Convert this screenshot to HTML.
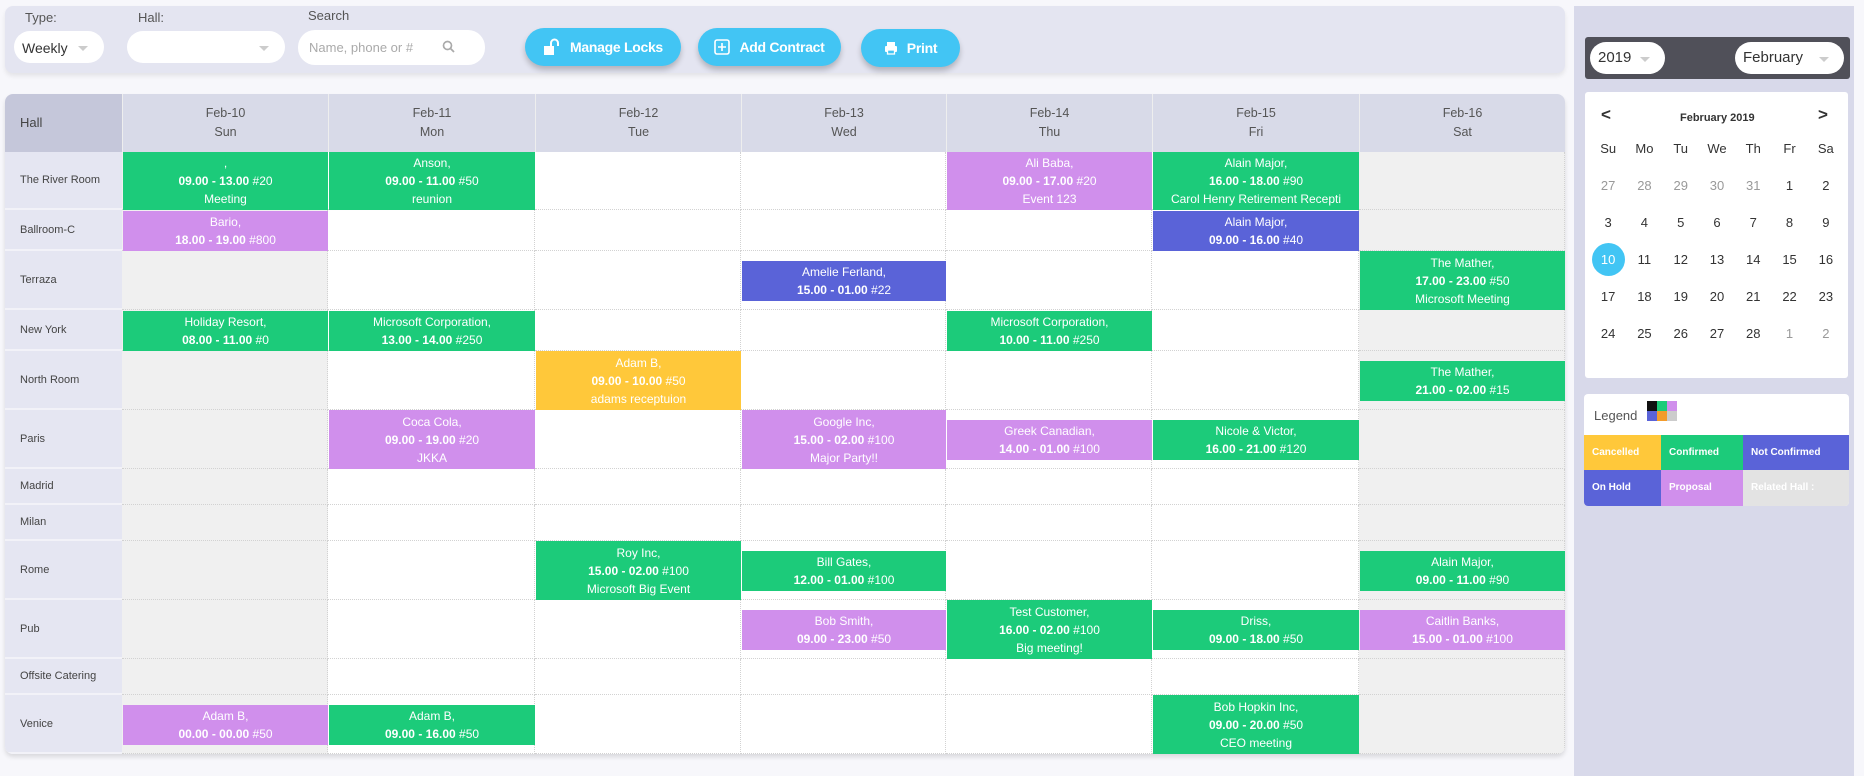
<!DOCTYPE html>
<html><head><meta charset="utf-8"><style>
*{box-sizing:border-box;margin:0;padding:0}
body{width:1864px;height:776px;background:#f7f7fb;font-family:"Liberation Sans",sans-serif;position:relative;overflow:hidden;color:#444}
.abs{position:absolute}
.bar{left:5px;top:6px;width:1560px;height:67px;background:#e4e5f1;border-radius:8px;box-shadow:0 3px 5px rgba(0,0,0,.08)}
.lbl{font-size:13px;color:#555}
.sel{background:#fff;border-radius:17px;font-size:14px;color:#333}
.caret{position:absolute;width:0;height:0;border-left:5px solid transparent;border-right:5px solid transparent;border-top:5px solid #ccc}
.btn{background:#42c5f4;border-radius:20px;color:#fff;font-weight:bold;font-size:14px;box-shadow:0 4px 6px rgba(0,0,0,.22);display:flex;align-items:center;justify-content:center;gap:9px;letter-spacing:-.3px}
.tbl{left:5px;top:94px;width:1560px;height:660px;background:#fff;border-radius:8px;box-shadow:0 3px 5px rgba(0,0,0,.12);overflow:hidden}
.hd{background:#d8dae8;text-align:center;font-size:12.5px;color:#555;line-height:19px;padding-top:10px}
.hall{background:#e5e6f2;font-size:11px;color:#444;padding-left:15px;display:flex;align-items:center;border-bottom:2px solid #f2f2f8}
.cell{border-right:1px dotted #d2d2d2;border-bottom:1px dotted #d2d2d2}
.we{background:#f0f0f0}
.ev{position:absolute;color:#fff;text-align:center;font-size:12px;line-height:18px;white-space:nowrap;overflow:hidden;display:flex;flex-direction:column;justify-content:center}
.ev b{font-weight:bold}
.g{background:#1ccb7a}.p{background:#d08fec}.bl{background:#5a63d8}.y{background:#ffc83a}
.cal td{text-align:center;font-size:13px;color:#333;height:37px;width:36px}
.cal .o{color:#999}
</style></head><body>
<div class="abs bar"></div>
<div class="abs lbl" style="left:25px;top:10px">Type:</div>
<div class="abs lbl" style="left:138px;top:10px">Hall:</div>
<div class="abs lbl" style="left:308px;top:8px">Search</div>
<div class="abs sel" style="left:14px;top:31px;width:90px;height:32px;padding:9px 0 0 8px">Weekly<span class="caret" style="left:64px;top:15px"></span></div>
<div class="abs sel" style="left:127px;top:31px;width:158px;height:32px"><span class="caret" style="left:132px;top:15px"></span></div>
<div class="abs sel" style="left:298px;top:30px;width:187px;height:35px;padding:10px 0 0 11px;font-size:13px;color:#aaa">Name, phone or #
<svg class="abs" style="left:144px;top:10px" width="13" height="13" viewBox="0 0 13 13"><circle cx="5.5" cy="5.5" r="4" fill="none" stroke="#aaa" stroke-width="1.7"/><path d="M8.5 8.5l3.5 3.5" stroke="#aaa" stroke-width="1.8"/></svg></div>
<div class="abs btn" style="left:525px;top:28px;width:156px;height:38px"><svg width="18" height="18" viewBox="0 0 18 18"><rect x="1" y="8" width="10" height="9" fill="#fff"/><path d="M8 8V5a3.5 3.5 0 0 1 7 0v3" fill="none" stroke="#fff" stroke-width="2"/></svg>Manage Locks</div>
<div class="abs btn" style="left:698px;top:28px;width:143px;height:38px"><svg width="16" height="16" viewBox="0 0 16 16"><rect x="1" y="1" width="14" height="14" rx="2" fill="none" stroke="#fff" stroke-width="1.6"/><path d="M8 4v8M4 8h8" stroke="#fff" stroke-width="1.6"/></svg>Add Contract</div>
<div class="abs btn" style="left:861px;top:29px;width:99px;height:38px"><svg width="14" height="14" viewBox="0 0 14 14"><rect x="3" y="1" width="8" height="4" fill="#fff"/><rect x="1" y="5" width="12" height="6" rx="1" fill="#fff"/><rect x="3.5" y="9" width="7" height="4" fill="#42c5f4" stroke="#fff" stroke-width="1.3"/></svg>Print</div>

<div class="abs tbl">
<div class="abs" style="left:0;top:0;width:117px;height:58px;background:#c5c7da;font-size:13px;color:#444;padding:21px 0 0 15px">Hall</div>
<div id="grid"></div>
</div>

<div class="abs" style="left:1574px;top:6px;width:280px;height:770px;background:#d8d9ea"></div>
<div class="abs" style="left:1585px;top:37px;width:265px;height:42px;background:#505059;border-radius:3px"></div>
<div class="abs sel" style="left:1590px;top:42px;width:75px;height:32px;padding:7px 0 0 8px;font-size:15px">2019<span class="caret" style="left:50px;top:15px"></span></div>
<div class="abs sel" style="left:1735px;top:42px;width:109px;height:32px;padding:7px 0 0 8px;font-size:15px">February<span class="caret" style="left:84px;top:15px"></span></div>
<div class="abs" style="left:1585px;top:92px;width:263px;height:286px;background:#fff;border-radius:3px"></div>
<div class="abs" style="left:1601px;top:105px;font-size:17px;font-weight:bold;color:#333">&lt;</div>
<div class="abs" style="left:1818px;top:105px;font-size:17px;font-weight:bold;color:#333">&gt;</div>
<div class="abs" style="left:1680px;top:112px;font-size:11px;font-weight:bold;color:#333">February 2019</div>
<table class="abs cal" style="left:1590px;top:130px;border-collapse:collapse;width:254px">
<tr><td style="height:37px">Su</td><td>Mo</td><td>Tu</td><td>We</td><td>Th</td><td>Fr</td><td>Sa</td></tr>
<tr><td class="o">27</td><td class="o">28</td><td class="o">29</td><td class="o">30</td><td class="o">31</td><td>1</td><td>2</td></tr>
<tr><td>3</td><td>4</td><td>5</td><td>6</td><td>7</td><td>8</td><td>9</td></tr>
<tr><td><span style="display:inline-block;width:33px;height:33px;border-radius:50%;background:#42c5f4;color:#fff;line-height:33px">10</span></td><td>11</td><td>12</td><td>13</td><td>14</td><td>15</td><td>16</td></tr>
<tr><td>17</td><td>18</td><td>19</td><td>20</td><td>21</td><td>22</td><td>23</td></tr>
<tr><td>24</td><td>25</td><td>26</td><td>27</td><td>28</td><td class="o">1</td><td class="o">2</td></tr>
</table>
<div class="abs" style="left:1584px;top:394px;width:265px;height:112px;background:#fff;border-radius:4px;overflow:hidden">
<div class="abs" style="left:10px;top:14px;font-size:13px;color:#555">Legend</div>
<div class="abs" style="left:63px;top:7px;width:30px;height:20px;display:grid;grid-template-columns:10px 10px 10px">
<i style="background:#111"></i><i style="background:#1ccb7a"></i><i style="background:#d08fec"></i><i style="background:#5a63d8"></i><i style="background:#f39c2b"></i><i style="background:#ccc"></i></div>
<div class="abs y" style="left:0;top:41px;width:77px;height:35px;color:#fff;font-size:10px;font-weight:bold;padding:12px 0 0 8px">Cancelled</div>
<div class="abs g" style="left:77px;top:41px;width:82px;height:35px;color:#fff;font-size:10px;font-weight:bold;padding:12px 0 0 8px">Confirmed</div>
<div class="abs bl" style="left:159px;top:41px;width:106px;height:35px;color:#fff;font-size:10px;font-weight:bold;padding:12px 0 0 8px">Not Confirmed</div>
<div class="abs bl" style="left:0;top:76px;width:77px;height:36px;color:#fff;font-size:10px;font-weight:bold;padding:12px 0 0 8px">On Hold</div>
<div class="abs p" style="left:77px;top:76px;width:82px;height:36px;color:#fff;font-size:10px;font-weight:bold;padding:12px 0 0 8px">Proposal</div>
<div class="abs" style="left:159px;top:76px;width:106px;height:36px;background:#e3e3e3;color:#fff;font-size:10px;font-weight:bold;padding:12px 0 0 8px">Related Hall :</div>
</div>

<script>
var cols=[117,323,530,736,941,1147,1354,1560];
var days=[["Feb-10","Sun"],["Feb-11","Mon"],["Feb-12","Tue"],["Feb-13","Wed"],["Feb-14","Thu"],["Feb-15","Fri"],["Feb-16","Sat"]];
var rows=[["The River Room",58],["Ballroom-C",41],["Terraza",59],["New York",41],["North Room",59],["Paris",59],["Madrid",36],["Milan",36],["Rome",59],["Pub",59],["Offsite Catering",36],["Venice",59]];
var h='';
for(var i=0;i<7;i++)h+='<div class="abs hd" style="left:'+cols[i]+'px;top:0;width:'+(cols[i+1]-cols[i])+'px;height:58px;border-left:1px solid #eee">'+days[i][0]+'<br>'+days[i][1]+'</div>';
var y=58,tops=[];
rows.forEach(function(r){tops.push([y,r[1]]);
h+='<div class="abs hall" style="left:0;top:'+y+'px;width:117px;height:'+r[1]+'px">'+r[0]+'</div>';
for(var i=0;i<7;i++)h+='<div class="abs cell'+((i==0||i==6)?' we':'')+'" style="left:'+cols[i]+'px;top:'+y+'px;width:'+(cols[i+1]-cols[i])+'px;height:'+r[1]+'px"></div>';
y+=r[1];});
var ev=[
[0,0,'g',',','09.00 - 13.00',' #20','Meeting'],[0,1,'g','Anson,','09.00 - 11.00',' #50','reunion'],[0,4,'p','Ali Baba,','09.00 - 17.00',' #20','Event 123'],[0,5,'g','Alain Major,','16.00 - 18.00',' #90','Carol Henry Retirement Recepti'],
[1,0,'p','Bario,','18.00 - 19.00',' #800'],[1,5,'bl','Alain Major,','09.00 - 16.00',' #40'],
[2,3,'bl','Amelie Ferland,','15.00 - 01.00',' #22'],[2,6,'g','The Mather,','17.00 - 23.00',' #50','Microsoft Meeting'],
[3,0,'g','Holiday Resort,','08.00 - 11.00',' #0'],[3,1,'g','Microsoft Corporation,','13.00 - 14.00',' #250'],[3,4,'g','Microsoft Corporation,','10.00 - 11.00',' #250'],
[4,2,'y','Adam B,','09.00 - 10.00',' #50','adams receptuion'],[4,6,'g','The Mather,','21.00 - 02.00',' #15'],
[5,1,'p','Coca Cola,','09.00 - 19.00',' #20','JKKA'],[5,3,'p','Google Inc,','15.00 - 02.00',' #100','Major Party!!'],[5,4,'p','Greek Canadian,','14.00 - 01.00',' #100'],[5,5,'g','Nicole &amp; Victor,','16.00 - 21.00',' #120'],
[8,2,'g','Roy Inc,','15.00 - 02.00',' #100','Microsoft Big Event'],[8,3,'g','Bill Gates,','12.00 - 01.00',' #100'],[8,6,'g','Alain Major,','09.00 - 11.00',' #90'],
[9,3,'p','Bob Smith,','09.00 - 23.00',' #50'],[9,4,'g','Test Customer,','16.00 - 02.00',' #100','Big meeting!'],[9,5,'g','Driss,','09.00 - 18.00',' #50'],[9,6,'p','Caitlin Banks,','15.00 - 01.00',' #100'],
[11,0,'p','Adam B,','00.00 - 00.00',' #50'],[11,1,'g','Adam B,','09.00 - 16.00',' #50'],[11,5,'g','Bob Hopkin Inc,','09.00 - 20.00',' #50','CEO meeting']];
ev.forEach(function(e){var t=tops[e[0]],three=e.length>6;var hh=three?t[1]:Math.min(40,t[1]);var top=t[0]+Math.round((t[1]-hh)/2);
h+='<div class="ev '+e[2]+'" style="left:'+(cols[e[1]]+1)+'px;top:'+top+'px;width:'+(cols[e[1]+1]-cols[e[1]]-1)+'px;height:'+hh+'px"><div>'+e[3]+'</div><div><b>'+e[4]+'</b>'+e[5]+'</div>'+(three?'<div>'+e[6]+'</div>':'')+'</div>';});
document.getElementById('grid').innerHTML=h;
</script>
</body></html>
